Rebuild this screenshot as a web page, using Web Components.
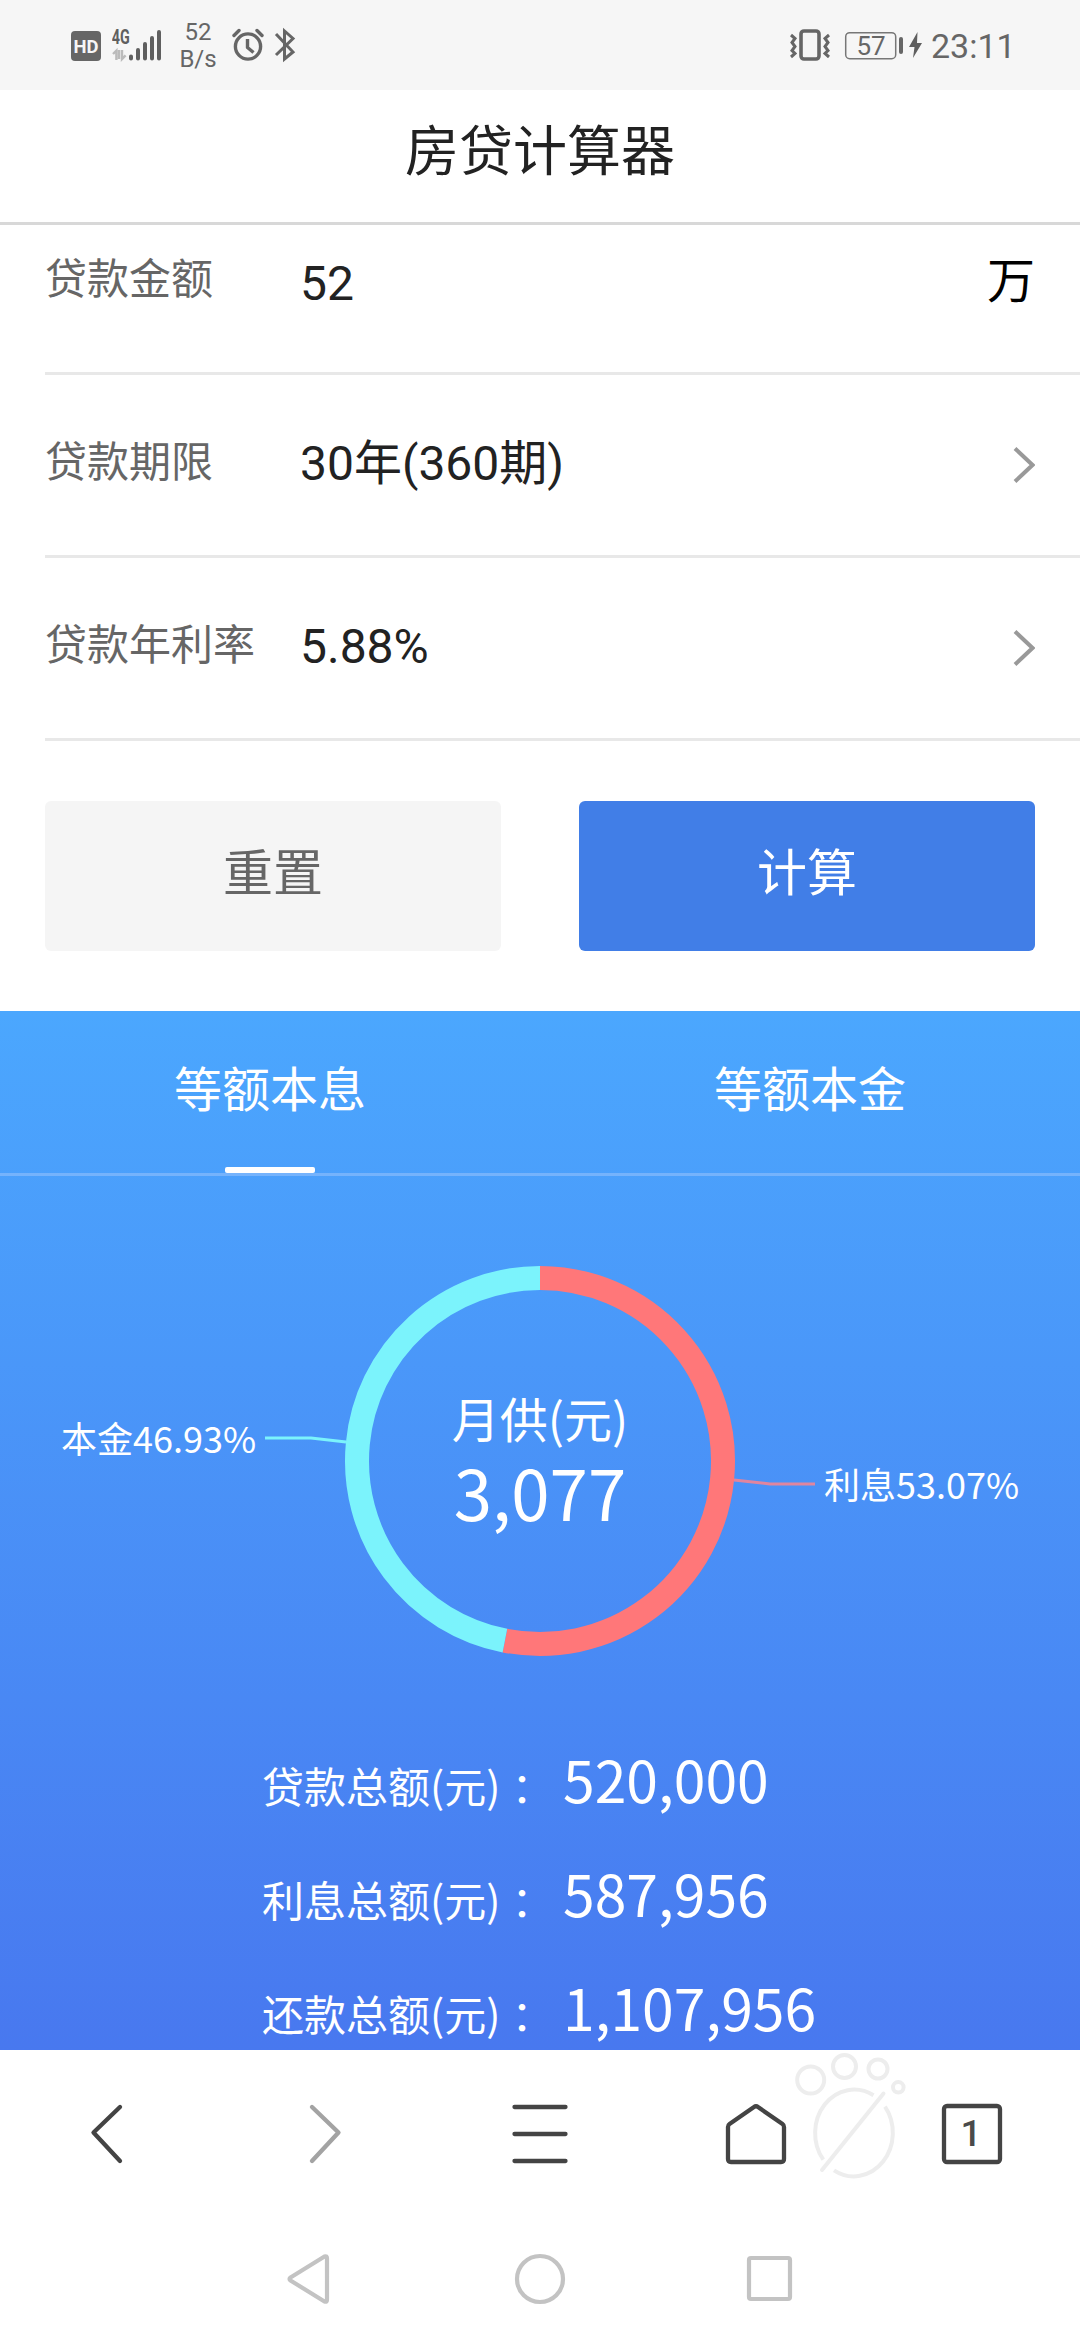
<!DOCTYPE html>
<html lang="zh-CN">
<head>
<meta charset="utf-8">
<title>房贷计算器</title>
<style>
html,body{margin:0;padding:0;background:#fff}
body{width:1080px;height:2340px;overflow:hidden;font-family:"Noto Sans CJK SC",sans-serif}
</style>
</head>
<body>
<loan-app></loan-app>
<script>
function define(name, css, html) {
  customElements.define(name, class extends HTMLElement {
    connectedCallback() {
      if (this.shadowRoot) return;
      const t = document.createElement('template');
      t.innerHTML = '<style>:host{display:block;box-sizing:border-box}*{box-sizing:border-box}svg{display:block;flex:none}' + css + '</style>' +
        (typeof html === 'function' ? html(this) : html);
      this.attachShadow({ mode: 'open' }).appendChild(t.content.cloneNode(true));
    }
  });
}

define('status-bar', `
:host{height:90px;background:#f6f6f6;display:flex;justify-content:space-between;padding:0 66px 0 71px;font-family:Roboto,sans-serif;color:#666}
.side{display:flex;height:90px}
.rate{width:40px;margin:19px 0 0 16px;text-align:center;font-size:24px;line-height:27px;font-weight:400}
.time{font-size:34px;line-height:40px;margin:26px 0 0 8px;width:83px;white-space:nowrap}
text{font-family:Roboto,sans-serif}
`, `
<div class="side">
<svg width="30" height="90"><rect y="31" width="30" height="30" rx="4" fill="#666"/><text x="15" y="53" font-size="19" font-weight="700" fill="#f6f6f6" text-anchor="middle" textLength="25" lengthAdjust="spacingAndGlyphs">HD</text></svg>
<svg width="50" height="90" style="margin-left:11px"><text x="-0.2" y="43.5" font-size="19.5" font-weight="700" fill="#5f5f5f" textLength="18" lengthAdjust="spacingAndGlyphs">4G</text>
<path d="M1 54l3.400-3.400V60M7 50v9M10 50v9l3.600-3.600" fill="none" stroke="#bbb" stroke-width="2.400"/>
<g stroke="#5f5f5f" stroke-width="4" stroke-linecap="round"><path d="M19 56.500v2M26 50v8.500M33 44v14.500M40 38v20.500M47 32v26.500"/></g></svg>
<div class="rate">52<br>B/s</div>
<svg width="32" height="90" style="margin-left:14px"><g fill="none" stroke="#666" stroke-width="3.400"><circle cx="16" cy="46.500" r="12.600"/><path d="M15.500 39v8.500l6 5" stroke-linejoin="round"/><path d="M2 35.500l5-5M30 35.500l-5-5" stroke-linecap="round"/></g></svg>
<svg width="22" height="90" style="margin-left:10px"><path d="M2 34l17 18-8.500 7V31l8.500 7.500L2 55" fill="none" stroke="#666" stroke-width="3"/></svg>
</div>
<div class="side">
<svg width="42" height="90"><g fill="none" stroke="#666"><rect x="12" y="31" width="18" height="28" rx="3" stroke-width="3.600"/><path d="M2 35l4 3.500-3 4 3 4-3 4 3 3-4 3.500M40 35l-4 3.500 3 4-3 4 3 4-3 3 4 3.500" stroke-width="3"/></g></svg>
<svg width="60" height="90" style="margin-left:13px"><rect x="1.700" y="32.700" width="50" height="26" rx="4" fill="none" stroke="#777" stroke-width="1.500"/><text x="27" y="54.500" font-size="26" fill="#666" text-anchor="middle">57</text><rect x="55" y="37" width="4" height="17" rx="2" fill="#666"/></svg>
<svg width="14" height="90" style="margin-left:5px"><path d="M8.500 32L0 47h5.500L4 58l9-15H8z" fill="#5f5f5f"/></svg>
<div class="time">23:11</div>
</div>`);

define('page-title', `
:host{height:135px;border-bottom:3px solid #d8d8d8;text-align:center;font-size:54px;line-height:80px;padding-top:18px;color:#222}
`, '<slot></slot>');

define('form-row', `
:host{height:183px;margin-left:45px;border-bottom:3px solid #e8e8e8;display:flex;align-items:flex-start;padding:54px 45px 0 0;line-height:60px}
:host([first]){height:150px;padding-top:21px}
.l{font-size:42px;color:#666;width:255px}
.v{font-size:48px;color:#222;font-family:Roboto,"Noto Sans CJK SC",sans-serif;flex:1;margin-top:5px}
:host([first]) .v{margin-top:8px}
.u{font-size:48px;color:#000;margin-top:1px}
svg{margin-top:18px}
`, el => `<div class="l">${el.getAttribute('label')}</div><div class="v"><slot></slot></div>` +
  (el.hasAttribute('unit') ? `<div class="u">${el.getAttribute('unit')}</div>`
    : '<svg width="22" height="36"><path d="M2 1.500L19.500 18 2 34.500" fill="none" stroke="#999" stroke-width="4"/></svg>'));

define('action-button', `
:host{flex:1;height:150px;border-radius:6px;background:#f5f5f5;color:#666;font-size:50px;line-height:80px;padding-top:28px;text-align:center}
:host([primary]){background:#417ee7;color:#fff}
`, '<slot></slot>');

define('tab-item', `
:host{flex:1;height:162px;display:flex;flex-direction:column;align-items:center;justify-content:space-between;font-size:48px;line-height:70px;padding-top:40px;color:#fff}
i{display:block;width:90px;height:6px;border-radius:2px}
:host([active]) i{background:#fff}
`, '<span><slot></slot></span><i></i>');

define('ratio-chart', `
:host{height:545px;color:#fff}
svg{width:1080px;height:545px}
text{font-family:"Noto Sans CJK SC",sans-serif;fill:#fff}
`, () => {
  const cx = 540, cy = 285, r = 183, a = 0.5307 * 2 * Math.PI;
  const ex = cx + r * Math.sin(a), ey = cy - r * Math.cos(a);
  return `<svg viewBox="0 0 1080 545"><g fill="none" stroke-width="24">
  <path stroke="#ff7779" d="M${cx} ${cy - r}A${r} ${r} 0 1 1 ${ex} ${ey}"/>
  <path stroke="#7bf3fc" d="M${ex} ${ey}A${r} ${r} 0 0 1 ${cx} ${cy - r}"/></g>
  <path d="M265 262H311L346 266" fill="none" stroke="#7bf3fc" stroke-width="3"/>
  <path d="M734 304L770 308H815" fill="none" stroke="#e0859f" stroke-width="3"/>
  <text x="540" y="261.500" font-size="48" text-anchor="middle">月供(元)</text>
  <text x="540" y="345" font-size="69" text-anchor="middle">3,077</text>
  <text x="61" y="277" font-size="36">本金46.93%</text>
  <text x="824" y="323" font-size="36">利息53.07%</text></svg>`;
});

define('sum-row', `
:host{display:flex;align-items:baseline;height:114px;line-height:114px;color:#fff;padding-left:262px}
.l{font-size:42px;width:301px;white-space:nowrap}
.c{margin-left:11px}
.v{font-size:57px}
`, el => `<div class="l">${el.getAttribute('label')}<span class="c">：</span></div><div class="v"><slot></slot></div>`);

define('result-panel', `
:host{height:1039px;background:linear-gradient(#4ba7fe,#4878ef);overflow:hidden}
.tabs{display:flex;height:165px;border-bottom:3px solid #75b3fc}
`, `<div class="tabs"><tab-item active>等额本息</tab-item><tab-item>等额本金</tab-item></div>
<ratio-chart></ratio-chart>
<div class="sums"><sum-row label="贷款总额(元)">520,000</sum-row><sum-row label="利息总额(元)">587,956</sum-row><sum-row label="还款总额(元)">1,107,956</sum-row></div>`);

define('browser-toolbar', `
:host{height:168px;display:flex;justify-content:space-around;position:relative;background:#fff}
svg{width:80px;height:168px;fill:none;stroke:#444;stroke-width:4.300;stroke-linecap:round;stroke-linejoin:round}
.cell{width:216px;display:flex;justify-content:center}
.paw{position:absolute;left:790px;top:0;width:130px;height:140px;stroke:#ededed;stroke-width:4}
text{font:500 37px Roboto,sans-serif;fill:#4a4a4a;stroke:none}
`, `
<div class="cell"><svg><path d="M52 57L25.500 82.500 52 111"/></svg></div>
<div class="cell"><svg style="stroke:#a3a3a3"><path d="M28 57L54.500 82.500 28 111"/></svg></div>
<div class="cell"><svg><path d="M14.500 57h51M14.500 84h51M14.500 111h51"/></svg></div>
<div class="cell"><svg><path d="M12 77q0-2 1.500-3L38 57q2-1.500 4 0L66.500 74q1.500 1 1.500 3V109q0 3-3 3H15q-3 0-3-3z"/></svg></div>
<div class="cell"><svg><rect x="12" y="56" width="56" height="56" rx="3"/><text x="39" y="96" text-anchor="middle">1</text></svg></div>
<svg class="paw"><circle cx="20.700" cy="30" r="13.500"/><circle cx="54.500" cy="16.500" r="11.500"/><circle cx="88" cy="19" r="9.500"/><circle cx="108.300" cy="37.300" r="5.300"/>
<g stroke-linecap="butt"><path d="M83.500 45.300A39 43.500 0 0 0 33.300 109.700M95 56.700A39 43.500 0 0 1 44 120.300"/></g><path d="M32 120L93.500 43.500"/></svg>`);

define('system-nav', `
:host{height:122px;display:flex;justify-content:center;gap:149px;background:#fff}
svg{width:80px;height:122px;fill:none;stroke:#c3c3c3;stroke-width:4.200;stroke-linejoin:round}
`, `
<svg><path d="M19.500 59.500q-2 1.500 0 3L53.500 83.500q2.500 1 2.500-2V40.500q0-3-2.500-2z"/></svg>
<svg><circle cx="40" cy="61" r="23"/></svg>
<svg><rect x="20" y="40" width="41" height="41" rx="2"/></svg>`);

define('loan-app', `
:host{width:1080px;height:2340px;display:flex;flex-direction:column;background:#fff}
:host>*{flex:none}
.actions{display:flex;gap:78px;padding:60px 45px}
`, `<status-bar></status-bar>
<page-title>房贷计算器</page-title>
<form-row first label="贷款金额" unit="万">52</form-row>
<form-row label="贷款期限">30年(360期)</form-row>
<form-row label="贷款年利率">5.88%</form-row>
<div class="actions"><action-button>重置</action-button><action-button primary>计算</action-button></div>
<result-panel></result-panel>
<browser-toolbar></browser-toolbar>
<system-nav></system-nav>`);
</script>
</body>
</html>
